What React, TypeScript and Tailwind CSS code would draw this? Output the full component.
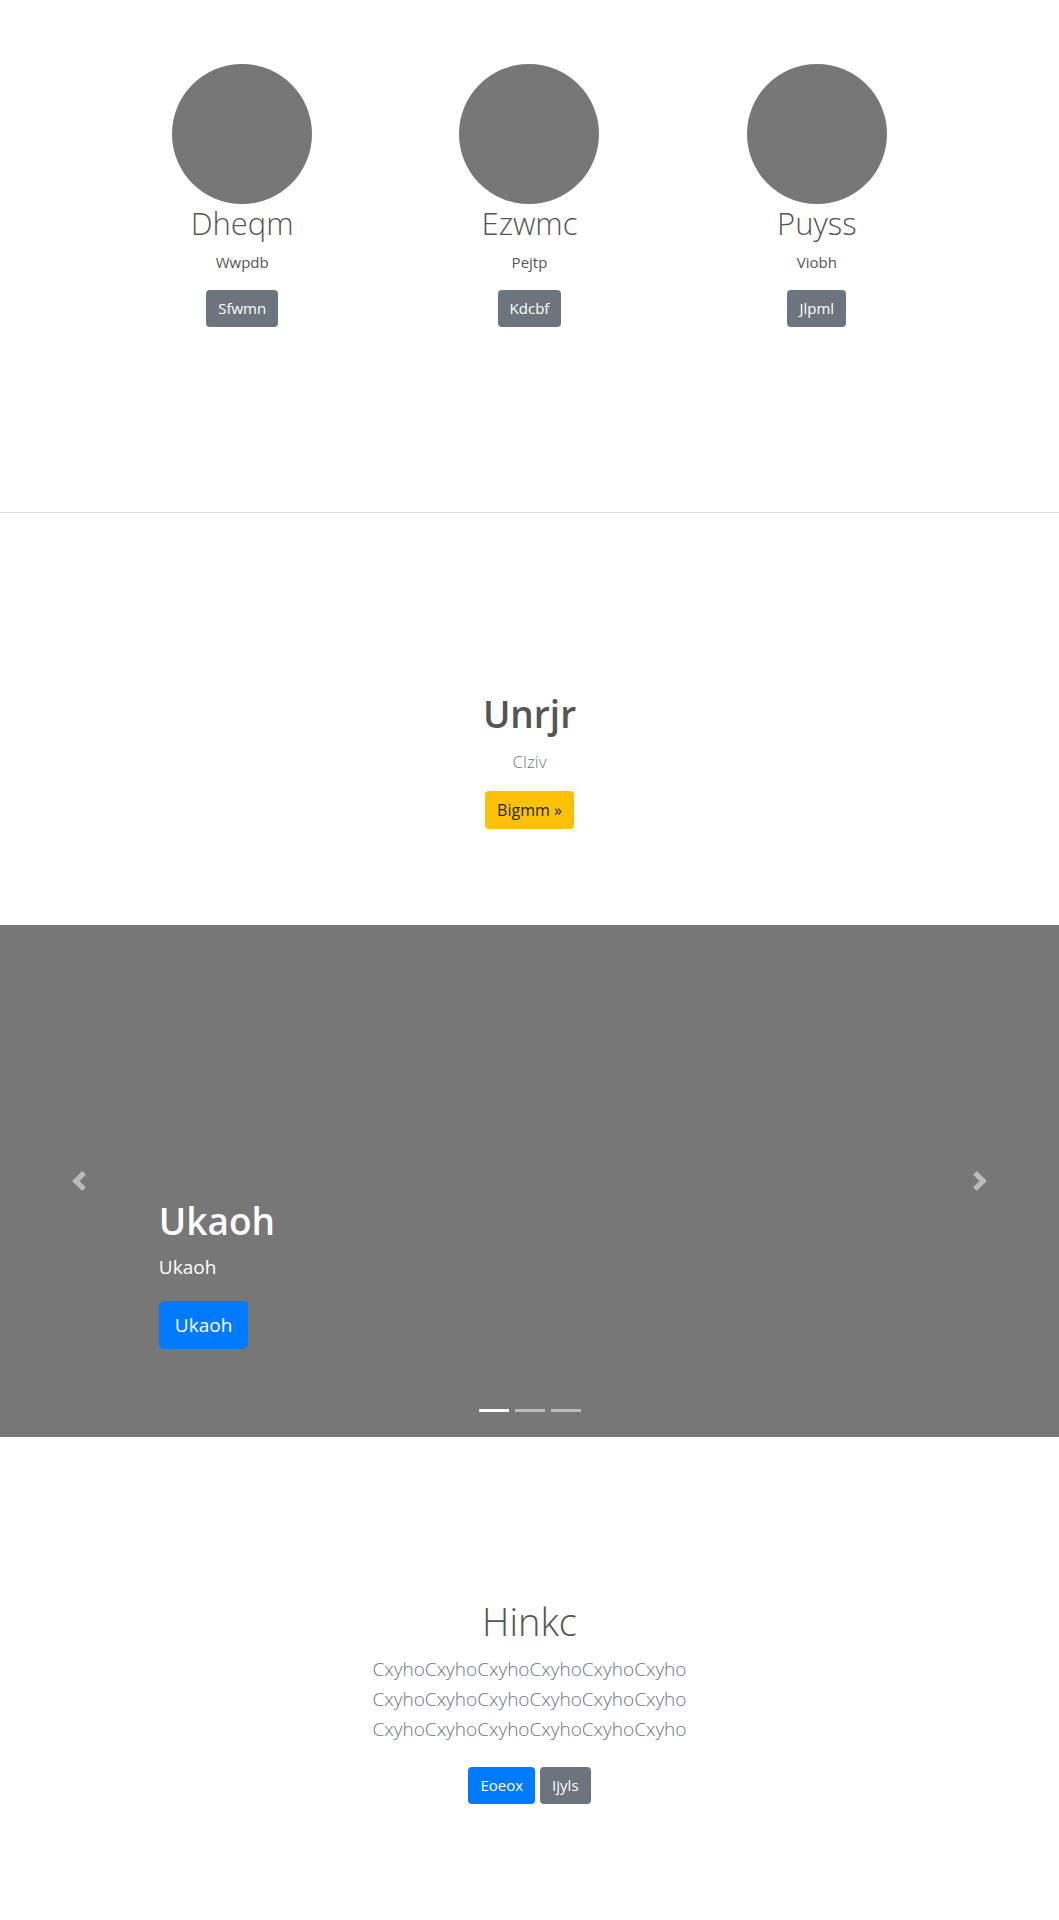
import React from 'react';

const team = [
  { name: 'Dheqm', role: 'Wwpdb', action: 'Sfwmn' },
  { name: 'Ezwmc', role: 'Pejtp', action: 'Kdcbf' },
  { name: 'Puyss', role: 'Viobh', action: 'Jlpml' },
];

function Chevron({ dir }: { dir: 'prev' | 'next' }) {
  return (
    <svg width="20" height="20" viewBox="0 0 8 8" className="opacity-50">
      <path
        fill="#fff"
        d={dir === 'prev' ? 'M5.25 0l-4 4 4 4 1.5-1.5L4.25 4l2.5-2.5L5.25 0z' : 'M2.75 0l-1.5 1.5L3.75 4l-2.5 2.5L2.75 8l4-4-4-4z'}
      />
    </svg>
  );
}

export default function App() {
  return (
    <div className="w-[1059px] bg-white font-['Open_Sans',sans-serif] text-[#212529]">
      {/* team */}
      <section className="h-[513px] border-b border-[#e0e0e0] pt-[64px]">
        <div className="mx-auto grid w-[862px] grid-cols-3">
          {team.map((m) => (
            <div key={m.name} className="flex flex-col items-center">
              <div className="h-[140px] w-[140px] rounded-full bg-[#777]" />
              <h2 className="text-[31px] font-light leading-[38px] text-[#555]">{m.name}</h2>
              <p className="mt-[9px] text-[15px] leading-[22px] text-[#555]">{m.role}</p>
              <button className="mt-[17px] h-[37px] rounded-[4px] bg-[#6c757d] px-3 text-[15px] text-white">
                {m.action}
              </button>
            </div>
          ))}
        </div>
      </section>

      {/* cta */}
      <section className="flex h-[412px] flex-col items-center pt-[177px]">
        <h1 className="text-[37px] font-semibold leading-[48px] text-[#555]">Unrjr</h1>
        <p className="mt-[11px] text-[17px] font-light leading-[26px] text-[#6c757d]">Clziv</p>
        <button className="mt-[16px] h-[38px] rounded-[4px] bg-[#ffc107] px-3 text-[16px] text-[#212529]">
          Bigmm »
        </button>
      </section>

      {/* carousel */}
      <section className="relative flex h-[512px] flex-col justify-end bg-[#777] pb-[88px] pl-[15%]">
        <h2 className="text-[37px] font-semibold leading-[48px] text-white">Ukaoh</h2>
        <p className="mt-[7px] text-[19px] leading-[30px] text-white">Ukaoh</p>
        <div className="mt-[19px]">
          <button className="h-[48px] rounded-[5px] bg-[#007bff] px-4 text-[19px] text-white">Ukaoh</button>
        </div>
        <div className="absolute inset-y-0 left-0 flex w-[15%] items-center justify-center">
          <Chevron dir="prev" />
        </div>
        <div className="absolute inset-y-0 right-0 flex w-[15%] items-center justify-center">
          <Chevron dir="next" />
        </div>
        <div className="absolute inset-x-0 bottom-[25px] flex justify-center gap-[6px]">
          <span className="h-[3px] w-[30px] bg-white" />
          <span className="h-[3px] w-[30px] bg-white/50" />
          <span className="h-[3px] w-[30px] bg-white/50" />
        </div>
      </section>

      {/* about */}
      <section className="flex h-[483px] flex-col items-center pt-[160px]">
        <h2 className="text-[38px] font-light leading-[48px] text-[#555]">Hinkc</h2>
        <p className="mt-[9px] text-center text-[19px] font-light leading-[30px] text-[#6c757d]">
          CxyhoCxyhoCxyhoCxyhoCxyhoCxyho
          <br />
          CxyhoCxyhoCxyhoCxyhoCxyhoCxyho
          <br />
          CxyhoCxyhoCxyhoCxyhoCxyhoCxyho
        </p>
        <div className="mt-[23px] flex gap-[5px]">
          <button className="h-[37px] rounded-[4px] bg-[#007bff] px-3 text-[15px] text-white">Eoeox</button>
          <button className="h-[37px] rounded-[4px] bg-[#6c757d] px-3 text-[15px] text-white">Ijyls</button>
        </div>
      </section>
    </div>
  );
}
